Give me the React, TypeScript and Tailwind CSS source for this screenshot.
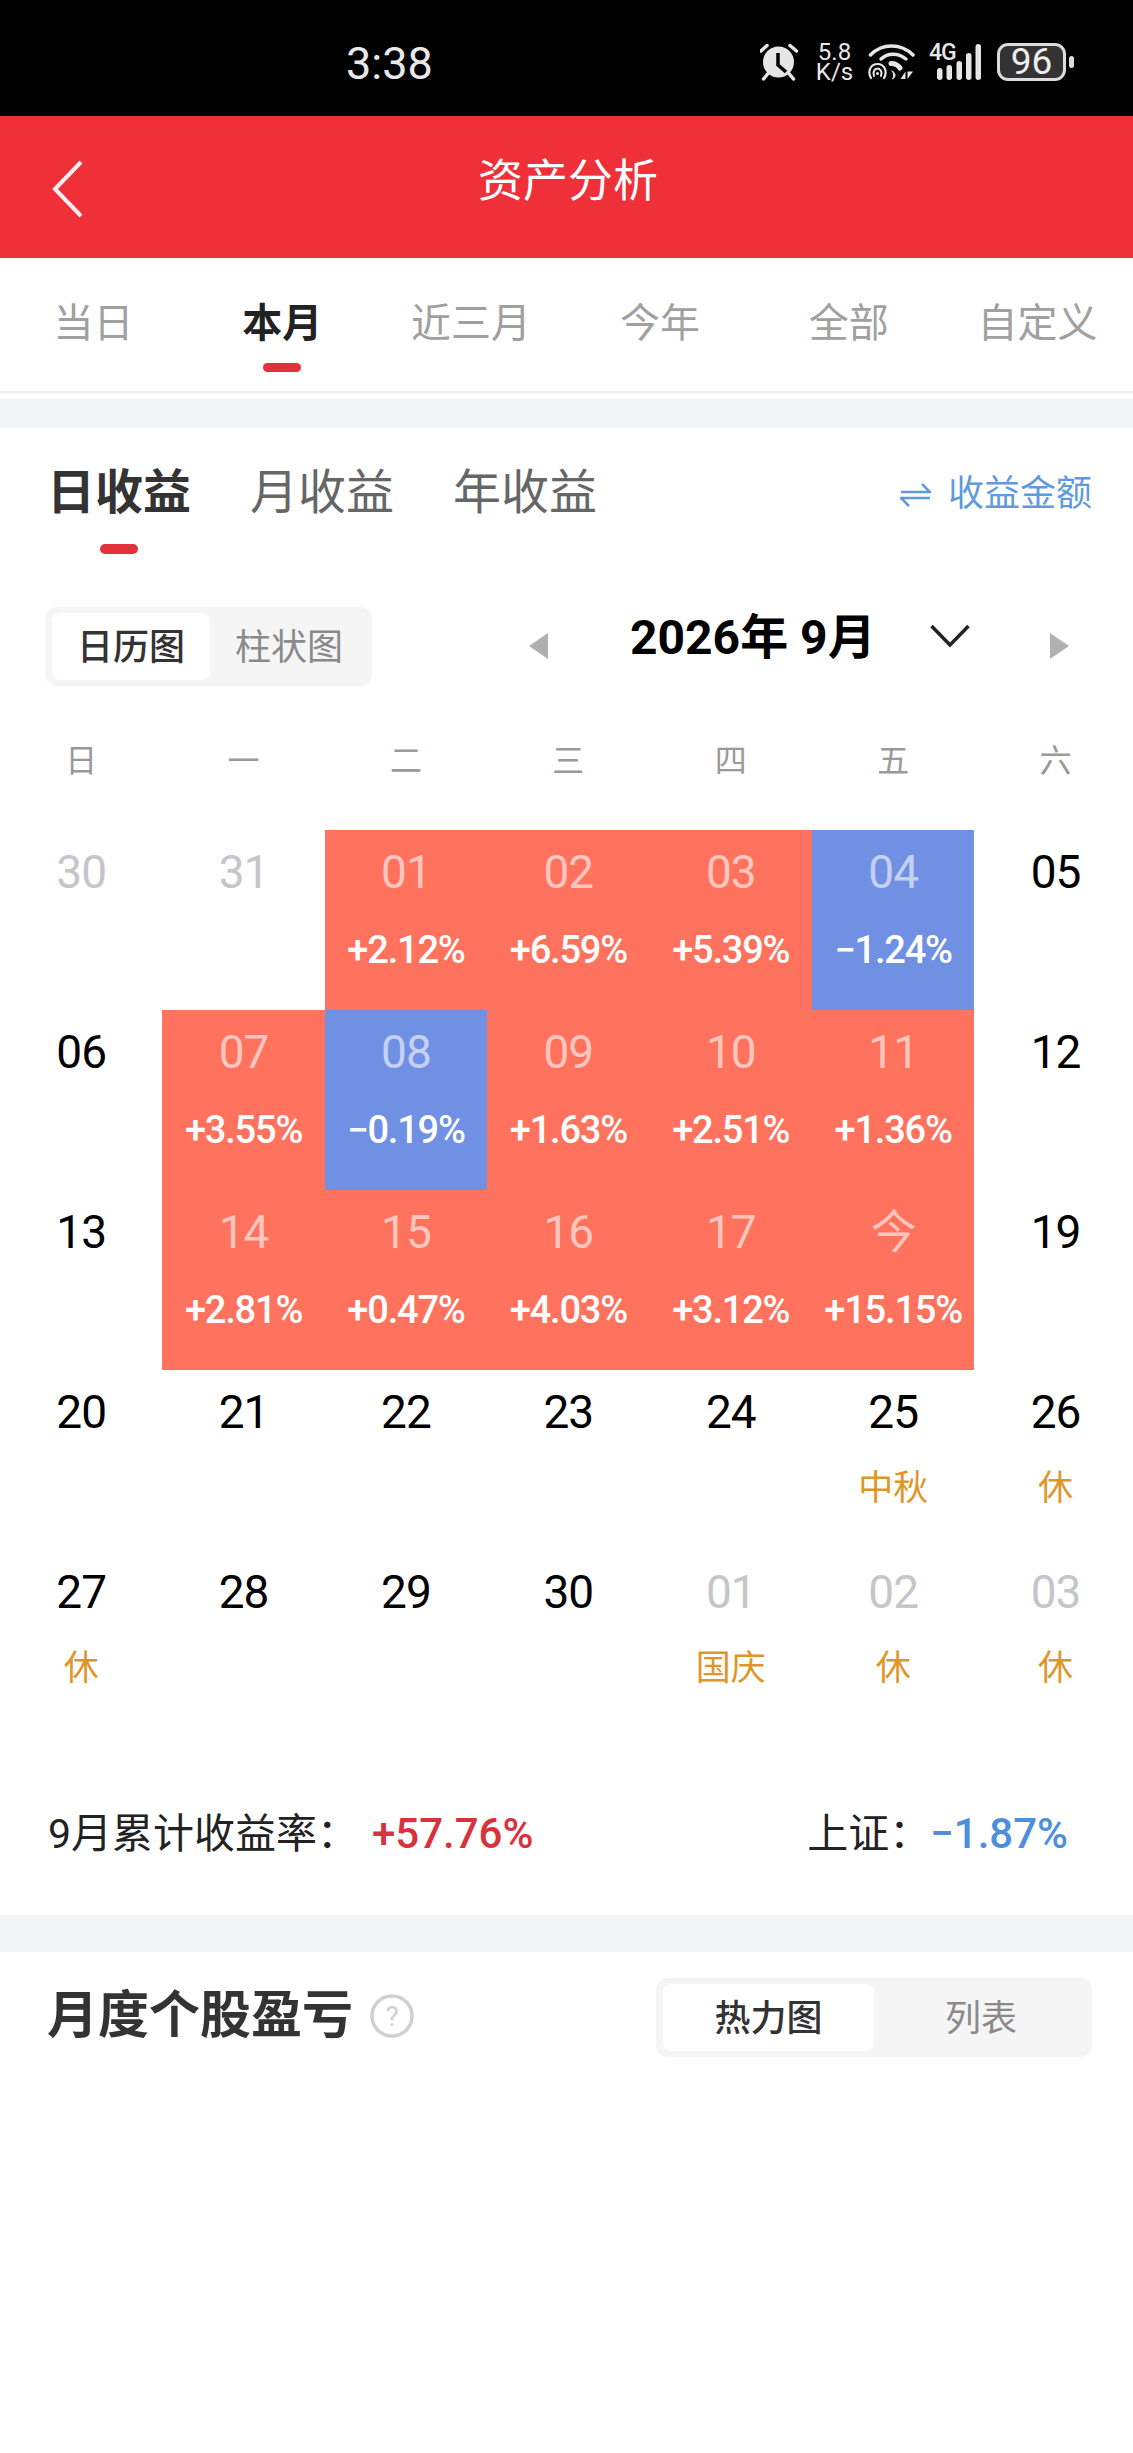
import React from "react";

type Cell = { d: string; kind?: "red" | "blue" | "muted"; pct?: string; tag?: string };

const rows: Cell[][] = [
  [
    { d: "30", kind: "muted" },
    { d: "31", kind: "muted" },
    { d: "01", kind: "red", pct: "+2.12%" },
    { d: "02", kind: "red", pct: "+6.59%" },
    { d: "03", kind: "red", pct: "+5.39%" },
    { d: "04", kind: "blue", pct: "−1.24%" },
    { d: "05" },
  ],
  [
    { d: "06" },
    { d: "07", kind: "red", pct: "+3.55%" },
    { d: "08", kind: "blue", pct: "−0.19%" },
    { d: "09", kind: "red", pct: "+1.63%" },
    { d: "10", kind: "red", pct: "+2.51%" },
    { d: "11", kind: "red", pct: "+1.36%" },
    { d: "12" },
  ],
  [
    { d: "13" },
    { d: "14", kind: "red", pct: "+2.81%" },
    { d: "15", kind: "red", pct: "+0.47%" },
    { d: "16", kind: "red", pct: "+4.03%" },
    { d: "17", kind: "red", pct: "+3.12%" },
    { d: "今", kind: "red", pct: "+15.15%" },
    { d: "19" },
  ],
  [
    { d: "20" },
    { d: "21" },
    { d: "22" },
    { d: "23" },
    { d: "24" },
    { d: "25", tag: "中秋" },
    { d: "26", tag: "休" },
  ],
  [
    { d: "27", tag: "休" },
    { d: "28" },
    { d: "29" },
    { d: "30" },
    { d: "01", kind: "muted", tag: "国庆" },
    { d: "02", kind: "muted", tag: "休" },
    { d: "03", kind: "muted", tag: "休" },
  ],
];

function DayCell({ c }: { c: Cell }) {
  const bg = c.kind === "red" ? "bg-[#ff735e]" : c.kind === "blue" ? "bg-[#6f90e3]" : "bg-white";
  const num =
    c.kind === "red" || c.kind === "blue"
      ? "text-white/60"
      : c.kind === "muted"
        ? "text-[#c5c6ca]"
        : "text-black";
  return (
    <div className={`h-[180px] flex flex-col items-center pt-[17px] ${bg}`}>
      <div className={`h-[50px] text-[46px] leading-[50px] tracking-[-1px] ${num}`}>{c.d}</div>
      {c.pct && <div className="mt-[28px] h-[50px] text-[38px] leading-[50px] font-medium tracking-[-1.2px] text-white">{c.pct}</div>}
      {c.tag && <div className="mt-[27px] h-[50px] text-[35px] leading-[50px] text-[#e0952a]">{c.tag}</div>}
    </div>
  );
}

function Alarm() {
  return (
    <svg width="38" height="38" viewBox="0 0 38 38" className="shrink-0">
      <circle cx="18.5" cy="19" r="15.5" fill="#e6e6e6" />
      <path d="M18 10V22L26 29" fill="none" stroke="#000" strokeWidth="3.5" />
      <path d="M1 8L7 2.5M36.5 8L30 2.5M3.5 36L8 30.5M33.5 36L29 30.5" stroke="#e6e6e6" strokeWidth="3.5" strokeLinecap="round" />
    </svg>
  );
}

function Wifi() {
  return (
    <svg width="47" height="38" viewBox="0 0 47 38" className="shrink-0" fill="none" stroke="#e6e6e6" strokeLinecap="round">
      <path d="M2.5 12C14 0 33 0 45 12" strokeWidth="3.5" />
      <path d="M13 16C20 9.5 30 9.5 38 16" strokeWidth="3.5" />
      <path d="M23 20.5C27 20.5 30 22 32 25" strokeWidth="5" />
      <path d="M3 35C-1 28 3 21 9.5 21C16 21 20 28 16 35" strokeWidth="2.2" />
      <path d="M6 33C4.5 29 6.5 25.5 9.5 25.5C12.5 25.5 14.5 29 13 33" strokeWidth="2" />
      <circle cx="9.5" cy="30.5" r="1.5" fill="#e6e6e6" stroke="none" />
      <path d="M24 28C26 30 26 34 24.5 36C28 34.5 28 29.5 24 28Z" fill="#e6e6e6" stroke="#e6e6e6" strokeWidth="1" />
      <path d="M37.5 28.5V36H32.5Z" fill="#e6e6e6" stroke="none" />
      <path d="M39.5 28.5V36L45 28.5Z" fill="#e6e6e6" stroke="none" />
    </svg>
  );
}

function Signal() {
  return (
    <div className="relative w-[53px] h-[38px] shrink-0">
      <svg width="53" height="38" viewBox="0 0 53 38" className="block" fill="#e6e6e6">
        <rect x="8" y="25" width="5.5" height="12" rx="2.75" />
        <rect x="17.5" y="22" width="5.5" height="15" rx="2.75" />
        <rect x="27.5" y="18" width="5.5" height="19" rx="2.75" />
        <rect x="37" y="10" width="5.5" height="27" rx="2.75" />
        <rect x="46.5" y="1" width="5.5" height="36" rx="2.75" />
      </svg>
      <span className="absolute left-0 top-[-1px] text-[23px] leading-[22px] font-medium tracking-[-1px] text-[#e6e6e6]">4G</span>
    </div>
  );
}

function Triangle({ dir }: { dir: "l" | "r" }) {
  return (
    <svg width="19" height="26" viewBox="0 0 19 26" className="mt-[26px] shrink-0">
      <path d={dir === "l" ? "M19 0V26L0 13Z" : "M0 0V26L19 13Z"} fill="#b0b0b0" />
    </svg>
  );
}

function Segment({ w, a, b, first }: { w: string; a: string; b: string; first: string }) {
  return (
    <div className={`${w} h-[79px] flex items-center pl-[7px] pr-[4px] rounded-[12px] bg-[#f5f5f5] shrink-0`}>
      <div className={`${first} h-[67px] pt-[2px] flex items-center justify-center rounded-[8px] bg-white text-[36px] font-medium text-[#333]`}>{a}</div>
      <div className="flex-1 pt-[2px] text-center text-[36px] text-[#8a8a8a]">{b}</div>
    </div>
  );
}

export default function App() {
  return (
    <div className="w-[1133px] min-h-[2453px] overflow-hidden bg-white [font-family:Roboto,'Noto_Sans_CJK_SC',sans-serif]">
      {/* status bar */}
      <div className="h-[116px] bg-black flex items-center pt-[8px] pl-[346px] pr-[59px] text-[#e8e8e8]">
        <span className="pt-[2px] text-[45px] leading-none">3:38</span>
        <div className="ml-auto flex items-center">
          <Alarm />
          <div className="ml-[18px] w-[37px] flex flex-col items-center text-[24px] leading-[20px]">
            <span>5.8</span>
            <span>K/s</span>
          </div>
          <div className="ml-[15px]"><Wifi /></div>
          <div className="ml-[14px]"><Signal /></div>
          <div className="ml-[15px] w-[69px] h-[38px] rounded-[11px] border-[3px] border-[#dcdcdc] bg-[#333] flex items-center justify-center text-[37px] text-[#eee]">96</div>
          <div className="ml-[3px] w-[5px] h-[12px] rounded-full bg-[#dcdcdc]" />
        </div>
      </div>

      {/* nav bar */}
      <div className="h-[142px] bg-[#ef3039] grid grid-cols-[1fr_auto_1fr] items-center">
        <svg width="34" height="60" viewBox="0 0 34 60" className="ml-[51px] mt-[4px]">
          <path d="M30 3L4 30L30 57" fill="none" stroke="#fff" strokeOpacity="0.92" strokeWidth="4" />
        </svg>
        <div className="pl-[3px] text-[45px] leading-none text-white pb-[12px]">资产分析</div>
        <div />
      </div>

      {/* range tabs */}
      <div className="h-[135px] border-b-[2px] border-[#eeeeee] flex">
        {["当日", "本月", "近三月", "今年", "全部", "自定义"].map((t, i) => (
          <div key={t} className="flex-1 flex flex-col items-center pt-[41px] pr-[2px]">
            <div className={`h-[50px] text-[40px] leading-[50px] ${i === 1 ? "font-bold text-[#222]" : "text-[#a0a0a0]"}`}>{t}</div>
            {i === 1 && <div className="mt-[14px] w-[38px] h-[9px] rounded-full bg-[#e4323c]" />}
          </div>
        ))}
      </div>
      <div className="h-[6px] bg-white" />
      <div className="h-[29px] bg-[#f2f3f7]" />

      {/* earnings section */}
      <div className="flex items-start pl-[47px] pr-[41px] pt-[35px] h-[126px]">
        <div className="flex flex-col items-center">
          <div className="h-[60px] text-[48px] leading-[60px] font-bold text-[#333]">日收益</div>
          <div className="mt-[21px] w-[38px] h-[10px] rounded-full bg-[#e4323c]" />
        </div>
        <div className="ml-[59px] h-[60px] text-[48px] leading-[60px] text-[#666]">月收益</div>
        <div className="ml-[59px] h-[60px] text-[48px] leading-[60px] text-[#666]">年收益</div>
        <div className="ml-auto h-[60px] pt-[2px] flex items-center text-[36px] text-[#5f9bdc]">
          <svg width="31" height="24" viewBox="0 0 31 24" className="mr-[17px] mt-[2px]" fill="none" stroke="#5f9bdc" strokeWidth="2.6">
            <path d="M1 9H30L22 1" />
            <path d="M30 15H1L9 23" />
          </svg>
          收益金额
        </div>
      </div>

      <div className="mt-[53px] flex items-start pl-[45px]">
        <Segment w="w-[327px]" first="w-[158px]" a="日历图" b="柱状图" />
        <div className="ml-[157px]"><Triangle dir="l" /></div>
        <div className="ml-[82px] w-[241px] h-[60px] pt-[1px] text-[48px] leading-[60px] font-bold text-black whitespace-nowrap">2026年 9月</div>
        <svg width="40" height="24" viewBox="0 0 40 24" className="ml-[59px] mt-[17px]">
          <path d="M1.5 2L20 21L38.5 2" fill="none" stroke="#222" strokeWidth="3.5" />
        </svg>
        <div className="ml-[80px]"><Triangle dir="r" /></div>
      </div>

      {/* weekdays */}
      <div className="grid grid-cols-[repeat(7,162.4px)] pt-[55px] pb-[49px]">
        {["日", "一", "二", "三", "四", "五", "六"].map((d) => (
          <div key={d} className="h-[40px] text-center text-[32px] leading-[40px] text-[#999]">{d}</div>
        ))}
      </div>

      {/* calendar */}
      <div className="grid grid-cols-[repeat(7,162.4px)]">
        {rows.flat().map((c, i) => (
          <DayCell key={i} c={c} />
        ))}
      </div>

      {/* summary */}
      <div className="mt-[79px] mb-[56px] h-[50px] flex items-center pl-[48px] pr-[65px] leading-[50px]">
        <span className="w-[324px] text-[41px] text-[#222] whitespace-nowrap">9月累计收益率：</span>
        <span className="text-[42px] font-medium text-[#d8323c]">+57.76%</span>
        <span className="ml-auto text-[41px] text-[#222]">上证：</span>
        <span className="text-[42px] font-medium text-[#4e8fdc]">−1.87%</span>
      </div>
      <div className="h-[37px] bg-[#f2f3f7]" />

      {/* monthly stocks */}
      <div className="flex items-center pl-[47px] pr-[41px] pt-[26px]">
        <div className="text-[51px] leading-[60px] font-bold text-[#333] mb-[3px]">月度个股盈亏</div>
        <svg width="44" height="44" viewBox="0 0 44 44" className="ml-[17px] mb-[3px]">
          <circle cx="22" cy="22" r="20" fill="none" stroke="#d0d0d0" strokeWidth="3.5" />
          <text x="22" y="32" textAnchor="middle" fontSize="28" fill="#d0d0d0">?</text>
        </svg>
        <div className="ml-auto">
          <Segment w="w-[436px]" first="w-[211px]" a="热力图" b="列表" />
        </div>
      </div>
    </div>
  );
}
